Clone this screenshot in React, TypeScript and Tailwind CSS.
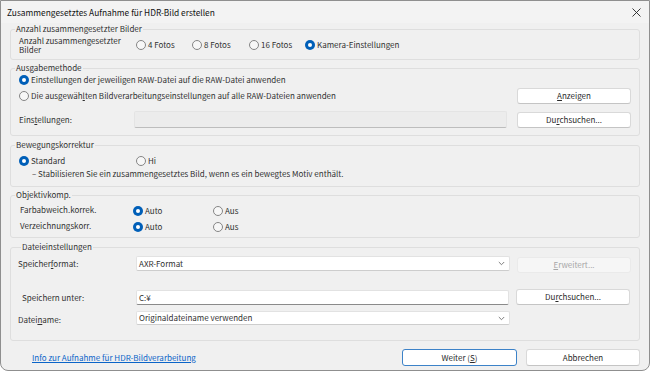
import React from "react";

type RadioProps = { checked?: boolean; label: React.ReactNode };

function Radio({ checked = false, label }: RadioProps) {
  return (
    <span className="flex items-center gap-[2px] whitespace-nowrap">
      {checked ? (
        <span className="flex h-[10px] w-[10px] shrink-0 items-center justify-center rounded-full bg-[#005fb8]">
          <span className="h-[4px] w-[4px] rounded-full bg-white" />
        </span>
      ) : (
        <span className="h-[10px] w-[10px] shrink-0 rounded-full border border-[#858585] bg-[#f7f7f7]" />
      )}
      <span>{label}</span>
    </span>
  );
}

type BtnProps = {
  children: React.ReactNode;
  primary?: boolean;
  disabled?: boolean;
  className?: string;
};

function Btn({ children, primary, disabled, className = "" }: BtnProps) {
  let look = "border-[#d9d9d9] border-b-[#c4c4c4] bg-white text-[#2a2a2a]";
  if (primary) look = "border-[#3c82c8] bg-white text-[#2a2a2a]";
  if (disabled) look = "border-[#eaeaea] bg-[#f6f6f6] text-[#a6a6a6]";
  return (
    <button
      type="button"
      className={`flex h-[16px] shrink-0 items-center justify-center rounded-[3px] border leading-none ${look} ${className}`}
    >
      {children}
    </button>
  );
}

function Chevron() {
  return (
    <svg width="7" height="5" viewBox="0 0 7 5" className="mr-[4px]">
      <path d="M0.8 1l2.7 2.7L6.2 1" fill="none" stroke="#6f6f6f" strokeWidth="0.9" />
    </svg>
  );
}

function Select({ value, className = "" }: { value: string; className?: string }) {
  return (
    <div
      className={`flex items-center justify-between rounded-[2px] border border-[#e2e2e2] border-b-[#cdcdcd] bg-white pl-[2px] ${className}`}
    >
      <span>{value}</span>
      <Chevron />
    </div>
  );
}

type GroupProps = {
  title: React.ReactNode;
  legendClass?: string;
  className?: string;
  children: React.ReactNode;
};

function Group({ title, legendClass = "ml-[4px]", className = "", children }: GroupProps) {
  return (
    <fieldset className={`mx-[9px] rounded-[3px] border border-[#dedede] ${className}`}>
      <legend className={`px-[1px] leading-[10px] ${legendClass}`}>{title}</legend>
      {children}
    </fieldset>
  );
}

const U = ({ children }: { children: React.ReactNode }) => (
  <span className="underline underline-offset-1">{children}</span>
);

export default function App() {
  return (
    <div className="h-[371px] w-[650px] overflow-hidden bg-white font-['Noto_Sans_CJK_JP',sans-serif] text-[8px] text-[#303030]">
      <div className="flex h-full flex-col rounded-b-[8px] border border-[#8f8f8f] bg-[#f0f0f0]">
        {/* title bar */}
        <div className="flex h-[22px] shrink-0 items-center justify-between bg-[#f3f3f3] pl-[6px] pr-[8px] text-[8.4px] text-[#111]">
          <span>Zusammengesetztes Aufnahme für HDR-Bild erstellen</span>
          <svg width="9" height="9" viewBox="0 0 9 9">
            <path d="M0.5 0.5l8 8M8.5 0.5l-8 8" stroke="#222" strokeWidth="0.9" />
          </svg>
        </div>

        <Group title="Anzahl zusammengesetzter Bilder" className="mt-[1px]">
          <div className="flex items-center pb-[5px] pl-[8px] pt-[2px]">
            <span className="w-[117px] leading-[9px]">
              Anzahl zusammengesetzter
              <br />
              Bilder
            </span>
            <span className="w-[56px]">
              <Radio label="4 Fotos" />
            </span>
            <span className="w-[57px]">
              <Radio label="8 Fotos" />
            </span>
            <span className="w-[56px]">
              <Radio label="16 Fotos" />
            </span>
            <Radio checked label="Kamera-Einstellungen" />
          </div>
        </Group>

        <Group title="Ausgabemethode" className="mt-[3px]">
          <div className="flex flex-col px-[8px] pb-[7px]">
            <div className="flex h-[14px] items-center">
              <Radio checked label="Einstellungen der jeweiligen RAW-Datei auf die RAW-Datei anwenden" />
            </div>
            <div className="mt-[1px] flex h-[16px] items-center justify-between">
              <Radio
                label={
                  <>
                    Die ausgewäh<U>l</U>ten Bildverarbeitungseinstellungen auf alle RAW-Dateien anwenden
                  </>
                }
              />
              <Btn className="w-[114px]">
                <U>A</U>nzeigen
              </Btn>
            </div>
            <div className="mt-[7px] flex h-[17px] items-center">
              <span className="w-[115px]">
                Eins<U>t</U>ellungen:
              </span>
              <div className="h-[17px] w-[373px] rounded-[2px] border border-[#e4e4e4] border-b-[#bdbdbd] bg-[#ececec]" />
              <Btn className="ml-auto w-[114px]">
                Du<U>r</U>chsuchen...
              </Btn>
            </div>
          </div>
        </Group>

        <Group title="Bewegungskorrektur" className="mt-[4px]">
          <div className="flex flex-col pb-[6px] pl-[8px] pt-[4px]">
            <div className="flex h-[14px] items-center">
              <span className="w-[117px]">
                <Radio checked label="Standard" />
              </span>
              <Radio label="Hi" />
            </div>
            <div className="flex h-[12px] items-center pl-[13px]">
              – Stabilisieren Sie ein zusammengesetztes Bild, wenn es ein bewegtes Motiv enthält.
            </div>
          </div>
        </Group>

        <Group title="Objektivkomp." className="mt-[3px]">
          <div className="flex flex-col pb-[2px] pl-[8px] pt-[3px]">
            <div className="flex h-[16px] items-center">
              <span className="w-[114px] pb-[3px] pl-[1px]">Farbabweich.korrek.</span>
              <span className="w-[80px]">
                <Radio checked label="Auto" />
              </span>
              <Radio label="Aus" />
            </div>
            <div className="flex h-[16px] items-center">
              <span className="w-[114px] pb-[3px] pl-[1px]">Verzeichnungskorr.</span>
              <span className="w-[80px]">
                <Radio checked label="Auto" />
              </span>
              <Radio label="Aus" />
            </div>
          </div>
        </Group>

        <Group title="Dateieinstellungen" legendClass="ml-[10px]" className="mt-[4px]">
          <div className="flex flex-col pb-[14px] pl-[7px] pr-[8px] pt-[4px]">
            <div className="flex h-[16px] items-start">
              <span className="w-[118px] pt-[2px]">
                Speicher<U>f</U>ormat:
              </span>
              <Select value="AXR-Format" className="h-[15px] w-[374px]" />
              <Btn disabled className="ml-auto mt-[1px] h-[15px] w-[114px]">
                <U>E</U>rweitert...
              </Btn>
            </div>
            <div className="mt-[17px] flex h-[16px] items-start">
              <span className="w-[118px] pl-[4px] pt-[3px]">Speichern unter:</span>
              <div className="mt-[1px] flex h-[15px] w-[373px] items-center rounded-[2px] border border-[#e2e2e2] border-b-[#8a8a8a] bg-white pl-[2px]">
                C:¥
              </div>
              <Btn className="ml-[7px] h-[15px] w-[114px]">
                Du<U>r</U>chsuchen...
              </Btn>
            </div>
            <div className="mt-[6px] flex h-[15px] items-start">
              <span className="w-[118px] pt-[3px]">
                Datei<U>n</U>ame:
              </span>
              <Select value="Originaldateiname verwenden" className="h-[14px] w-[374px]" />
            </div>
          </div>
        </Group>

        <div className="mr-[9px] mt-[8px] flex h-[17px] items-center">
          <span className="pl-[31px] text-[#0a64c8] underline underline-offset-1">
            Info zur Aufnahme für HDR-Bildverarbeitung
          </span>
          <Btn primary className="ml-auto h-[17px] w-[115px]">
            Weiter (<U>S</U>)
          </Btn>
          <Btn className="ml-[9px] h-[17px] w-[114px]">Abbrechen</Btn>
        </div>
      </div>
    </div>
  );
}
